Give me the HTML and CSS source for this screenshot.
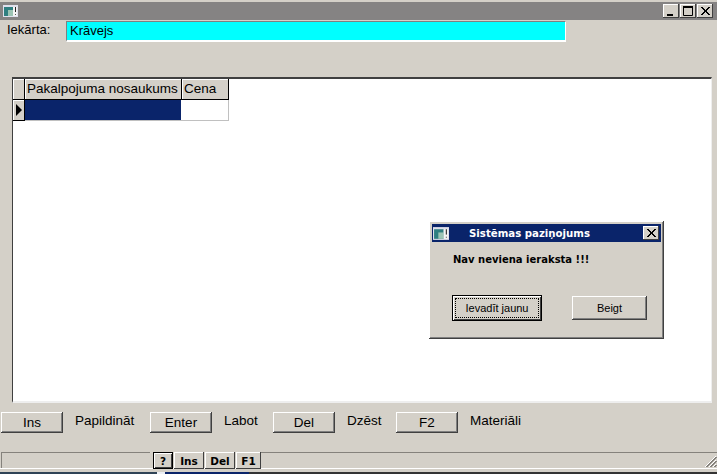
FILE: index.html
```html
<!DOCTYPE html>
<html lang="lv">
<head>
  <meta charset="UTF-8">
  <title>Iekārta</title>
  <link rel="stylesheet" href="styles.css">
</head>
<body>
  <div class="window">
    <div class="titlebar">
      <svg class="app-icon" width="15" height="12" viewBox="0 0 15 12">
        <rect width="15" height="12" fill="#dfe0ec"/>
        <rect x="1" y="2" width="9" height="9" fill="#2f7f80"/>
        <rect x="5" y="5" width="5" height="6" fill="#9cc4b4"/>
        <rect x="10" y="2" width="4" height="9" fill="#f4f4f4"/>
        <rect x="12" y="2" width="1" height="5" fill="#222"/>
        <rect x="12" y="9" width="1" height="1" fill="#555"/>
      </svg>
      <div class="win-buttons">
        <button class="cap-btn">
          <svg width="16" height="14" viewBox="0 0 16 14"><rect x="4" y="10" width="6" height="2" fill="#000"/></svg>
        </button>
        <button class="cap-btn">
          <svg width="16" height="14" viewBox="0 0 16 14"><path d="M3.5 2.5h9v9h-9z" fill="none" stroke="#000"/><rect x="3" y="2" width="10" height="2" fill="#000"/></svg>
        </button>
        <button class="cap-btn">
          <svg width="16" height="14" viewBox="0 0 16 14"><path d="M4 3l8 8M5 3l8 8M12 3l-8 8M13 3l-8 8" stroke="#000" fill="none"/></svg>
        </button>
      </div>
    </div>

    <div class="device-row">
      <label class="device-label">Iekārta:</label>
      <div class="device-field">Krāvejs</div>
    </div>

    <div class="grid">
      <div class="grid-row grid-head">
        <div class="cell-mark"></div>
        <div class="cell-head col-name">Pakalpojuma nosaukums</div>
        <div class="cell-head col-price">Cena</div>
      </div>
      <div class="grid-row">
        <div class="cell-mark"><span class="arrow"></span></div>
        <div class="cell col-name selected"></div>
        <div class="cell col-price"></div>
      </div>
    </div>

    <div class="actions">
      <button class="btn btn-action">Ins</button>
      <span class="action-text text-add">Papildināt</span>
      <button class="btn btn-action">Enter</button>
      <span class="action-text">Labot</span>
      <button class="btn btn-action">Del</button>
      <span class="action-text">Dzēst</span>
      <button class="btn btn-action">F2</button>
      <span class="action-text">Materiāli</span>
    </div>

    <div class="statusbar">
      <div class="status-pane"></div>
      <div class="keys">
        <button class="key key-help">?</button>
        <button class="key">Ins</button>
        <button class="key">Del</button>
        <button class="key key-f1">F1</button>
      </div>
      <div class="status-rest">
        <svg class="grip" width="13" height="13" viewBox="0 0 13 13">
          <path d="M12 1L1 12M12 5L5 12M12 9L9 12" stroke="#fff" fill="none"/>
          <path d="M12 2L2 12M13 2L3 12M12 6L6 12M13 6L7 12M12 10L10 12M13 10L11 12" stroke="#85827c" fill="none"/>
        </svg>
      </div>
    </div>
  </div>
  <div class="taskbar-edge">
    <div class="edge-start"></div>
    <div class="edge-light"></div>
    <div class="edge-navy"></div>
    <div class="edge-rest"></div>
  </div>

  <div class="dialog">
    <div class="dialog-title">
      <svg class="app-icon" width="16" height="13" viewBox="0 0 15 12">
        <rect width="15" height="12" fill="#dfe0ec"/>
        <rect x="1" y="2" width="9" height="9" fill="#2f7f80"/>
        <rect x="5" y="5" width="5" height="6" fill="#9cc4b4"/>
        <rect x="10" y="2" width="4" height="9" fill="#f4f4f4"/>
        <rect x="12" y="2" width="1" height="5" fill="#222"/>
        <rect x="12" y="9" width="1" height="1" fill="#555"/>
      </svg>
      <span class="dialog-caption">Sistēmas paziņojums</span>
      <button class="cap-btn">
        <svg width="16" height="14" viewBox="0 0 16 14"><path d="M4 3l8 8M5 3l8 8M12 3l-8 8M13 3l-8 8" stroke="#000" fill="none"/></svg>
      </button>
    </div>
    <p class="dialog-msg">Nav neviena ieraksta !!!</p>
    <div class="dialog-actions">
      <button class="btn dlg-btn dlg-default"><span class="focus">Ievadīt jaunu</span></button>
      <button class="btn dlg-btn">Beigt</button>
    </div>
  </div>
</body>
</html>
```

FILE: styles.css
```css
html, body {
  margin: 0;
  padding: 0;
}

body {
  width: 717px;
  height: 474px;
  overflow: hidden;
  position: relative;
  background-color: #d4d0c8;
  font-family: "Liberation Sans", Arial, sans-serif;
  font-size: 13px;
  color: #000;
}

button {
  font-family: inherit;
  color: #000;
  padding: 0;
  margin: 0;
  background-color: #d4d0c8;
}

.window {
  height: 472px;
  display: flex;
  flex-direction: column;
  padding-top: 2px;
  box-sizing: border-box;
}

.titlebar {
  height: 18px;
  flex: none;
  display: flex;
  align-items: center;
  justify-content: space-between;
  padding: 0 4px 0 3px;
  background-color: #858383;
}

.app-icon {
  display: block;
  flex: none;
}

.win-buttons {
  display: flex;
  gap: 1px;
}

.cap-btn {
  width: 16px;
  height: 14px;
  border: none;
  box-shadow: inset -1px -1px 0 #404040, inset 1px 1px 0 #fff;
  display: block;
}

.cap-btn svg {
  display: block;
}

.device-row {
  display: flex;
  height: 22px;
  flex: none;
  margin-top: 1px;
}

.device-label {
  width: 59px;
  padding-left: 7px;
  line-height: 17px;
}

.device-field {
  width: 495px;
  height: 18px;
  line-height: 18px;
  padding-left: 3px;
  background-color: #00ffff;
  border-left: 1px solid #808080;
  border-top: 1px solid #808080;
  border-bottom: 2px solid #fff;
  border-right: 1px solid #fff;
}

.grid {
  flex: none;
  height: 322px;
  margin: 34px 5px 0 12px;
  background-color: #fff;
  border-top: 2px solid #404040;
  border-left: 1px solid #404040;
  border-right: 1px solid #eee;
  border-bottom: 2px solid #eee;
}

.grid-row {
  display: flex;
}

.cell-mark {
  width: 11px;
  height: 20px;
  flex: none;
  position: relative;
  background-color: #d4d0c8;
  box-shadow: inset 1px 1px 0 #fff;
  border-right: 1px solid #000;
  border-bottom: 1px solid #000;
}

.arrow {
  position: absolute;
  left: 3px;
  top: 4px;
  width: 0;
  height: 0;
  border-left: 6px solid #000;
  border-top: 6px solid transparent;
  border-bottom: 6px solid transparent;
}

.cell-head {
  height: 20px;
  line-height: 20px;
  padding-left: 2px;
  font-size: 13.5px;
  background-color: #d4d0c8;
  box-shadow: inset 1px 1px 0 #fff;
  border-right: 1px solid #000;
  border-bottom: 1px solid #000;
  white-space: nowrap;
}

.grid-head .col-name {
  width: 154px;
}

.grid-head .col-price {
  width: 44px;
}

.cell {
  height: 20px;
  background-color: #fff;
  border-right: 1px solid #c0c0c0;
  border-bottom: 1px solid #c0c0c0;
}

.cell.col-name {
  width: 156px;
  border-right: none;
}

.cell.col-price {
  width: 47px;
}

.selected {
  background-color: #0a246a;
}

.actions {
  display: flex;
  align-items: flex-start;
  margin-top: 9px;
  height: 21px;
  flex: none;
  padding-left: 1px;
  font-size: 13.5px;
}

.btn {
  height: 21px;
  font-size: 13.5px;
  border: none;
  box-sizing: border-box;
  box-shadow: inset -1px -1px 0 #404040, inset 1px 1px 0 #fff, inset -2px -2px 0 #808080;
  display: block;
  flex: none;
}

.btn-action {
  width: 62px;
}

.action-text {
  line-height: 18px;
  flex: none;
  width: 61px;
  padding-left: 12px;
  box-sizing: border-box;
}

.action-text.text-add {
  width: 87px;
}

.statusbar {
  display: flex;
  flex: none;
  height: 16px;
  margin-top: 19px;
  padding-left: 1px;
  border-bottom: 1px solid #fff;
}

.status-pane {
  width: 149px;
  box-sizing: border-box;
  border-top: 1px solid #85827c;
  border-left: 1px solid #85827c;
}

.keys {
  display: flex;
  flex: none;
  gap: 1px;
  margin-left: 3px;
}

.key {
  width: 30px;
  height: 17px;
  font-family: "DejaVu Sans", sans-serif;
  font-size: 10.5px;
  font-weight: bold;
  border: none;
  box-shadow: inset -1px -1px 0 #404040, inset 1px 1px 0 #fff;
}

.key-help {
  width: 20px;
  box-shadow: inset 0 0 0 1px #000, inset 2px 2px 0 #fff, inset -2px -2px 0 #404040;
}

.key-f1 {
  width: 25px;
}

.status-rest {
  flex: 1;
  position: relative;
  border-top: 1px solid #85827c;
}

.grip {
  position: absolute;
  right: 0;
  bottom: 0;
}

.taskbar-edge {
  height: 2px;
  display: flex;
}

.edge-start {
  width: 157px;
  background-color: #2f4356;
}

.edge-light {
  width: 8px;
  background-color: #eceff4;
}

.edge-navy {
  width: 84px;
  background-color: #0a246a;
}

.edge-rest {
  flex: 1;
  background-color: #333;
}

.dialog {
  position: absolute;
  left: 429px;
  top: 221px;
  width: 235px;
  height: 118px;
  box-sizing: border-box;
  padding: 3px 3px 0;
  background-color: #d4d0c8;
  box-shadow: inset -1px -1px 0 #404040, inset 1px 1px 0 #fff, inset -2px -2px 0 #808080;
}

.dialog-title {
  height: 18px;
  display: flex;
  align-items: center;
  padding: 0 2px 0 1px;
  background-color: #0a246a;
  color: #fff;
}

.dialog-caption {
  font-size: 10.2px;
  font-weight: bold;
  font-family: "DejaVu Sans", sans-serif;
  margin-left: 20px;
  flex: 1;
}

.dialog-msg {
  margin: 11px 0 0 21px;
  font-family: "DejaVu Sans", sans-serif;
  font-size: 10px;
  font-weight: bold;
  line-height: 14px;
}

.dialog-actions {
  display: flex;
  align-items: center;
  gap: 30px;
  margin: 28px 0 0 20px;
}

.dlg-btn {
  width: 75px;
  height: 24px;
  font-size: 11px;
}

.dlg-default {
  width: 90px;
  height: 26px;
  padding: 3px;
  box-shadow: inset 0 0 0 1px #000, inset 2px 2px 0 #fff, inset -2px -2px 0 #404040;
}

.focus {
  display: block;
  height: 100%;
  line-height: 18px;
  box-sizing: border-box;
  border: 1px dotted #000;
}
```
